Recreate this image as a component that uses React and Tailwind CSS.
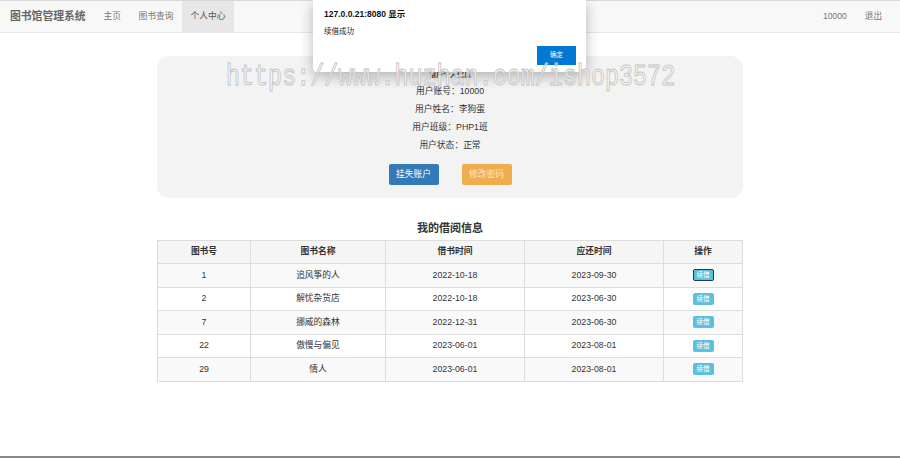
import React from 'react';

// Borrowed books for the current user
const BORROWS = [
  { id: 1, name: '追风筝的人', borrowed: '2022-10-18', due: '2023-09-30' },
  { id: 2, name: '解忧杂货店', borrowed: '2022-10-18', due: '2023-06-30' },
  { id: 7, name: '挪威的森林', borrowed: '2022-12-31', due: '2023-06-30' },
  { id: 22, name: '傲慢与偏见', borrowed: '2023-06-01', due: '2023-08-01' },
  { id: 29, name: '情人', borrowed: '2023-06-01', due: '2023-08-01' },
];

const USER_INFO = [
  ['用户账号', '10000'],
  ['用户姓名', '李狗蛋'],
  ['用户班级', 'PHP1班'],
  ['用户状态', '正常'],
];

function Navbar() {
  return (
    <nav className="h-[33px] flex items-stretch bg-[#f8f8f8] border-t border-t-[#d8d8d8] border-b border-b-[#e7e7e7]">
      <div className="pl-[10px] pr-[9px] flex items-center text-[10.8px] font-bold text-[#666]">
        图书馆管理系统
      </div>
      <div className="flex items-stretch text-[8.75px] text-[#777]">
        <a className="px-[9px] flex items-center">主页</a>
        <a className="px-[8.5px] flex items-center">图书查询</a>
        <a className="px-[8.5px] flex items-center bg-[#e7e7e7] text-[#555]">个人中心</a>
      </div>
      <div className="ml-auto flex items-stretch text-[8.6px] text-[#777] pr-[9px]">
        <span className="px-[9px] flex items-center">10000</span>
        <a className="px-[9px] flex items-center">退出</a>
      </div>
    </nav>
  );
}

function UserCard() {
  return (
    <div className="mx-auto mt-[23px] w-[586px] h-[142px] rounded-[12px] bg-[#f3f3f3] pt-[14px] text-center text-[#333]">
      <h4 className="text-[7px] leading-[9px] font-bold">用户个人信息</h4>
      <div className="mt-[3px] text-[8.75px] leading-[18px]">
        {USER_INFO.map(([label, value]) => (
          <p key={label}>
            {label}：{value}
          </p>
        ))}
      </div>
      <div className="mt-[10px] flex justify-center gap-[23px]">
        <button className="w-[50px] h-[21px] rounded-[2px] bg-[#337ab7] text-white text-[8.75px]">
          挂失账户
        </button>
        <button className="w-[50px] h-[21px] rounded-[2px] bg-[#f0ad4e] text-[#fbe6c6] text-[8.75px]">
          修改密码
        </button>
      </div>
    </div>
  );
}

function BorrowTable() {
  return (
    <div className="w-[586px] mx-auto">
      <h3 className="mt-[24px] mb-[6px] text-center text-[11px] leading-[12px] font-bold text-[#333]">
        我的借阅信息
      </h3>
      <table className="w-full table-fixed border-collapse text-[8.75px] text-[#333] text-center">
        <colgroup>
          <col className="w-[93px]" />
          <col className="w-[135px]" />
          <col className="w-[139px]" />
          <col className="w-[139px]" />
          <col />
        </colgroup>
        <thead>
          <tr className="h-[23px] bg-[#f5f5f5]">
            {['图书号', '图书名称', '借书时间', '应还时间', '操作'].map((h) => (
              <th key={h} className="border border-[#ddd] font-bold p-0">
                {h}
              </th>
            ))}
          </tr>
        </thead>
        <tbody>
          {BORROWS.map((row, i) => (
            <tr key={row.id} className={`h-[23.5px] ${i % 2 === 0 ? 'bg-[#f9f9f9]' : 'bg-white'}`}>
              <td className="border border-[#ddd] p-0">{row.id}</td>
              <td className="border border-[#ddd] p-0">{row.name}</td>
              <td className="border border-[#ddd] p-0">{row.borrowed}</td>
              <td className="border border-[#ddd] p-0">{row.due}</td>
              <td className="border border-[#ddd] p-0">
                <button
                  className={`w-[21px] h-[12px] rounded-[2px] bg-[#5bc0de] text-white text-[6.5px] leading-[10px] align-middle whitespace-nowrap ${
                    i === 0 ? 'border-[1.5px] border-[#1f3f4a]' : ''
                  }`}
                >
                  续借
                </button>
              </td>
            </tr>
          ))}
        </tbody>
      </table>
    </div>
  );
}

function AlertDialog() {
  return (
    <div className="absolute left-[313px] top-0 w-[273px] h-[72px] bg-white rounded-b-[4px] shadow-[0_4px_14px_rgba(0,0,0,0.28)] pl-[11px] pr-[10px] pt-[9px] flex flex-col font-['Liberation_Sans','Noto_Sans_CJK_SC',sans-serif]">
      <div className="text-[8.5px] leading-[10px] font-bold text-[#111]">127.0.0.21:8080 显示</div>
      <div className="mt-[9px] text-[7.5px] leading-[8px] text-[#222]">续借成功</div>
      <div className="mt-[10px] flex justify-end">
        <button className="w-[39px] h-[19px] bg-[#0078d4] text-white text-[6.5px] leading-none whitespace-nowrap flex items-center justify-center">
          确定
        </button>
      </div>
    </div>
  );
}

export default function App() {
  return (
    <div className="relative h-[458px] overflow-hidden bg-white border-b-2 border-[#888] font-['Liberation_Sans','Noto_Sans_CJK_SC',sans-serif]">
      <Navbar />
      <UserCard />
      <BorrowTable />
      <AlertDialog />
      {/* watermark */}
      <div className="absolute left-[226px] top-[62px] scale-y-[1.25] origin-top whitespace-nowrap font-['Liberation_Mono',monospace] text-[23.4px] leading-[24px] text-white/60 [-webkit-text-stroke:0.8px_#c4c4c4] pointer-events-none">
        https://www.huzhan.com/ishop3572
      </div>
    </div>
  );
}
